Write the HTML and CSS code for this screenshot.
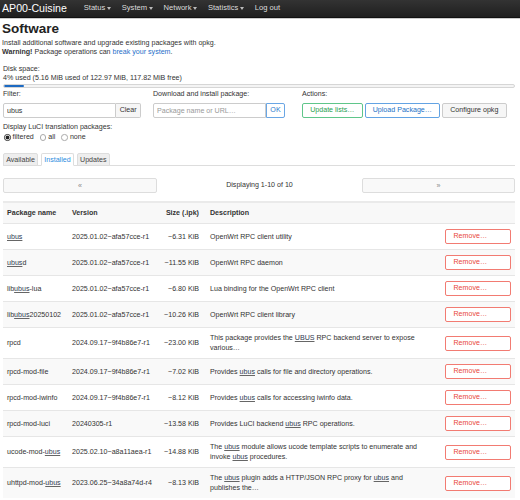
FILE: index.html
```html
<!DOCTYPE html>
<html lang="en">
<head>
<meta charset="utf-8">
<title>Software - AP00-Cuisine</title>
<link rel="stylesheet" href="styles.css">
</head>
<body>
<header class="topbar">
  <a class="brand" href="#">AP00-Cuisine</a>
  <nav class="menu">
    <a href="#">Status<span class="caret"></span></a>
    <a href="#">System<span class="caret"></span></a>
    <a href="#">Network<span class="caret"></span></a>
    <a href="#">Statistics<span class="caret"></span></a>
    <a href="#">Log out</a>
  </nav>
</header>

<main class="page">
  <h2 class="title">Software</h2>
  <p class="intro">Install additional software and upgrade existing packages with opkg.<br>
  <strong>Warning!</strong> Package operations can <a href="#">break your system</a>.</p>

  <div class="disk">
    <div>Disk space:</div>
    <div>4% used (5.16 MiB used of 122.97 MiB, 117.82 MiB free)</div>
    <div class="bar"><div class="fill" style="width:4%"></div></div>
  </div>

  <div class="controls">
    <div class="ctl ctl-filter">
      <label class="lbl">Filter:</label>
      <div class="group">
        <input class="field" type="text" value="ubus">
        <button class="btn btn-addon">Clear</button>
      </div>
    </div>
    <div class="ctl ctl-download">
      <label class="lbl">Download and install package:</label>
      <div class="group">
        <input class="field" type="text" placeholder="Package name or URL…">
        <button class="btn btn-addon btn-ok">OK</button>
      </div>
    </div>
    <div class="ctl ctl-actions">
      <label class="lbl">Actions:</label>
      <div class="actions">
        <button class="btn btn-act btn-green">Update lists…</button>
        <button class="btn btn-act btn-blue">Upload Package…</button>
        <button class="btn btn-act btn-gray">Configure opkg</button>
      </div>
    </div>
  </div>

  <div class="langs">
    <div>Display LuCI translation packages:</div>
    <div class="radios">
      <label class="radio"><input type="radio" name="lang" checked>filtered</label>
      <label class="radio"><input type="radio" name="lang">all</label>
      <label class="radio"><input type="radio" name="lang">none</label>
    </div>
  </div>

  <ul class="tabs">
    <li class="tab">Available</li>
    <li class="tab active">Installed</li>
    <li class="tab">Updates</li>
  </ul>

  <div class="pager">
    <button class="pbtn">«</button>
    <div class="pinfo">Displaying 1-10 of 10</div>
    <button class="pbtn">»</button>
  </div>

  <table class="pkgs">
    <colgroup>
      <col class="c-name"><col class="c-ver"><col class="c-size"><col class="c-desc"><col class="c-act">
    </colgroup>
    <thead>
      <tr><th>Package name</th><th>Version</th><th class="size">Size (.ipk)</th><th>Description</th><th></th></tr>
    </thead>
    <tbody>
      <tr><td class="nm"><span class="hl">ubus</span></td><td class="ver">2025.01.02~afa57cce-r1</td><td class="size">~6.31 KiB</td><td>OpenWrt RPC client utility</td><td class="act"><button class="rm">Remove…</button></td></tr>
      <tr><td class="nm"><span class="hl">ubus</span>d</td><td class="ver">2025.01.02~afa57cce-r1</td><td class="size">~11.55 KiB</td><td>OpenWrt RPC daemon</td><td class="act"><button class="rm">Remove…</button></td></tr>
      <tr><td class="nm">lib<span class="hl">ubus</span>-lua</td><td class="ver">2025.01.02~afa57cce-r1</td><td class="size">~6.80 KiB</td><td>Lua binding for the OpenWrt RPC client</td><td class="act"><button class="rm">Remove…</button></td></tr>
      <tr><td class="nm">lib<span class="hl">ubus</span>20250102</td><td class="ver">2025.01.02~afa57cce-r1</td><td class="size">~10.26 KiB</td><td>OpenWrt RPC client library</td><td class="act"><button class="rm">Remove…</button></td></tr>
      <tr><td class="nm">rpcd</td><td class="ver">2024.09.17~9f4b86e7-r1</td><td class="size">~23.00 KiB</td><td>This package provides the <span class="hl">UBUS</span> RPC backend server to expose various…</td><td class="act"><button class="rm">Remove…</button></td></tr>
      <tr><td class="nm">rpcd-mod-file</td><td class="ver">2024.09.17~9f4b86e7-r1</td><td class="size">~7.02 KiB</td><td>Provides <span class="hl">ubus</span> calls for file and directory operations.</td><td class="act"><button class="rm">Remove…</button></td></tr>
      <tr><td class="nm">rpcd-mod-iwinfo</td><td class="ver">2024.09.17~9f4b86e7-r1</td><td class="size">~8.12 KiB</td><td>Provides <span class="hl">ubus</span> calls for accessing iwinfo data.</td><td class="act"><button class="rm">Remove…</button></td></tr>
      <tr><td class="nm">rpcd-mod-luci</td><td class="ver">20240305-r1</td><td class="size">~13.58 KiB</td><td>Provides LuCI backend <span class="hl">ubus</span> RPC operations.</td><td class="act"><button class="rm">Remove…</button></td></tr>
      <tr><td class="nm">ucode-mod-<span class="hl">ubus</span></td><td class="ver">2025.02.10~a8a11aea-r1</td><td class="size">~14.88 KiB</td><td>The <span class="hl">ubus</span> module allows ucode template scripts to enumerate and invoke <span class="hl">ubus</span> procedures.</td><td class="act"><button class="rm">Remove…</button></td></tr>
      <tr><td class="nm">uhttpd-mod-<span class="hl">ubus</span></td><td class="ver">2023.06.25~34a8a74d-r4</td><td class="size">~8.13 KiB</td><td>The <span class="hl">ubus</span> plugin adds a HTTP/JSON RPC proxy for <span class="hl">ubus</span> and publishes the…</td><td class="act"><button class="rm">Remove…</button></td></tr>
    </tbody>
  </table>
</main>
</body>
</html>
```

FILE: styles.css
```css
* { box-sizing: border-box; }

html, body {
  margin: 0;
  padding: 0;
  background: #fff;
}

body {
  font-family: "Liberation Sans", Arial, sans-serif;
  font-size: 7.1px;
  line-height: 9.5px;
  color: #333;
}

a { color: #1f6fc9; text-decoration: none; }

/* ---------- top bar ---------- */
.topbar {
  height: 18px;
  display: flex;
  align-items: center;
  background: linear-gradient(#333, #1f1f1f);
  border-bottom: 1px solid #111;
  box-shadow: 0 1px 0 #ccc;
  padding: 0 0 1px 2px;
}

.brand {
  color: #fff;
  font-size: 10.6px;
  line-height: 14px;
  margin-right: 11.7px;
}

.menu { display: flex; align-items: center; }

.menu a {
  color: #ddd;
  font-size: 7.6px;
  line-height: 14px;
  padding: 0 5.25px;
  display: flex;
  align-items: center;
}

.caret {
  display: inline-block;
  width: 0;
  height: 0;
  margin-left: 2px;
  border-top: 3px solid #bbb;
  border-left: 2px solid transparent;
  border-right: 2px solid transparent;
}

/* ---------- page ---------- */
.page { padding: 0 5px 0 3px; }

.title {
  font-size: 13.5px;
  line-height: 16px;
  font-weight: bold;
  margin: 2.5px 0 0 -1px;
  color: #222;
}

.intro { margin: 2.4px 0 0 -1px; }
.intro strong { font-weight: bold; }

.disk { margin-top: 7px; }

.bar {
  height: 4px;
  border: 1px solid #d6d6d6;
  border-radius: 2px;
  background: #f4f4f4;
  overflow: hidden;
}
.fill { height: 100%; background: #1d6ac2; border-radius: 1px; }

/* ---------- controls ---------- */
.controls {
  display: flex;
  margin-top: 2px;
}

.ctl { display: flex; flex-direction: column; }
.ctl-filter { width: 138px; margin-right: 12px; }
.ctl-download { width: 132px; margin-right: 17px; }

.lbl { display: block; margin-bottom: 4px; }

.group { display: flex; height: 15px; }

.field {
  width: 114px;
  height: 15px;
  border: 1px solid #ccc;
  border-radius: 2px 0 0 2px;
  padding: 0 3px;
  font: inherit;
  color: #333;
  outline: none;
}
.field::placeholder { color: #999; }

.btn {
  font: inherit;
  height: 15px;
  border: 1px solid #ccc;
  border-radius: 2px;
  background: #f6f6f6;
  color: #333;
  padding: 0 3.4px;
  cursor: pointer;
  line-height: 13px;
}

.btn-addon {
  border-left: none;
  border-radius: 0 2px 2px 0;
}

.btn-ok {
  border: 1px solid #6aa6e4;
  color: #2b79cc;
  background: #fff;
}

.actions { display: flex; gap: 2px; }

.btn-act { padding: 0 7.2px; background: #fff; }
.btn-green { border-color: #5fc68a; color: #1f9e4f; }
.btn-blue { border-color: #63a3e3; color: #2271c6; }
.btn-gray { border-color: #ccc; color: #333; background: #f6f6f6; }

/* ---------- translations ---------- */
.langs { margin-top: 4.4px; }

.radios { display: flex; margin-top: 0.5px; }

.radio {
  display: flex;
  align-items: center;
  margin-right: 5px;
}

.radio input {
  appearance: none;
  -webkit-appearance: none;
  width: 6.5px;
  height: 6.5px;
  margin: 0 2px 0 1px;
  border: 1px solid #aaa;
  border-radius: 50%;
  background: #fff;
}
.radio input:checked {
  border-color: #333;
  background: radial-gradient(circle, #222 0 1.8px, #fff 2.1px);
}

/* ---------- tabs ---------- */
.tabs {
  list-style: none;
  margin: 10.8px 0 0;
  padding: 0;
  display: flex;
  border-bottom: 1px solid #ddd;
}

.tab {
  height: 13px;
  line-height: 12px;
  padding: 0 2.2px;
  margin-right: 3px;
  margin-bottom: -1px;
  border: 1px solid #ddd;
  border-radius: 2px 2px 0 0;
  background: #eee;
  color: #444;
}

.tab.active {
  background: #fff;
  border-bottom-color: #fff;
  color: #2d8de0;
}

/* ---------- pager ---------- */
.pager {
  display: grid;
  grid-template-columns: 154px 1fr 153px;
  align-items: center;
  margin-top: 12px;
}

.pbtn {
  font: inherit;
  height: 15px;
  border: 1px solid #ddd;
  border-radius: 2px;
  background: #f9f9f9;
  color: #888;
  line-height: 13px;
}

.pinfo { text-align: center; }

/* ---------- table ---------- */
.pkgs {
  width: 512px;
  margin-top: 8px;
  border-collapse: collapse;
  table-layout: fixed;
  line-height: 10px;
}

.c-name { width: 65px; }
.c-ver { width: 87px; }
.c-size { width: 51px; }
.c-desc { width: 226px; }
.c-act { width: 83px; }

.pkgs th, .pkgs td {
  padding: 5px 4px;
  text-align: left;
  vertical-align: middle;
}

.pkgs .nm, .pkgs .ver, .pkgs .size { white-space: nowrap; }

.pkgs thead tr {
  border-top: 2px solid #eaeaea;
  background: #f8f8f8;
}
.pkgs th { font-weight: bold; color: #333; white-space: nowrap; }

.pkgs tbody tr { border-top: 1px solid #e6e6e6; }
.pkgs tbody tr:nth-child(even) { background: #f9f9f9; }

.pkgs .size { text-align: right; padding-right: 7px; }

.pkgs .act { text-align: right; }

.hl {
  text-decoration: underline;
  text-decoration-color: #666;
  color: #2f3b52;
}

.rm {
  font: inherit;
  width: 66px;
  height: 15px;
  display: inline-block;
  vertical-align: middle;
  text-align: left;
  padding: 0 0 0 7.5px;
  line-height: 13px;
  border: 1px solid #f27b72;
  border-radius: 2px;
  background: #fff;
  color: #e8473c;
}
```
